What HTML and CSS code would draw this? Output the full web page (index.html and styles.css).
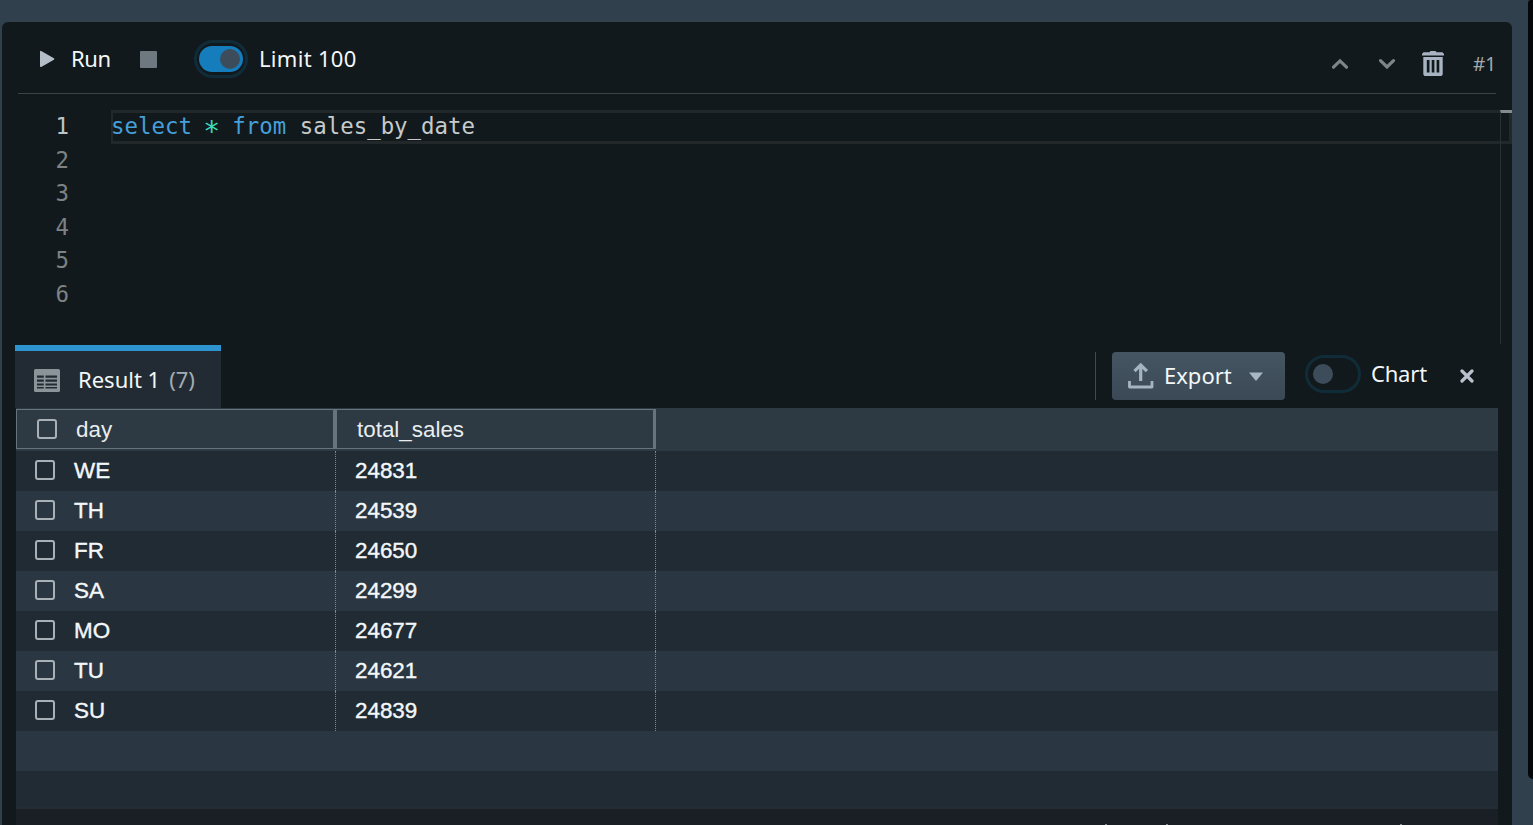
FILE: index.html
```html
<!DOCTYPE html>
<html lang="en">
<head>
  <meta charset="UTF-8">
  <title>Query Editor</title>
  <link rel="stylesheet" href="styles.css">
</head>
<body>

<div class="workspace">
  <div class="cell">

    <div class="toolbar">
      <div class="actions">
        <svg class="play" width="16" height="18" viewBox="0 0 16 18"><path d="M1.800 1.700v14.600L14.500 9z" fill="#b3bec9" stroke="#b3bec9" stroke-width="1.600" stroke-linejoin="round"/></svg>
        <span class="run">Run</span>
        <span class="stop"></span>
        <span class="switch on"><span class="track"><span class="knob"></span></span></span>
        <span class="limit">Limit 100</span>
      </div>
      <div class="cell-tools">
        <svg class="up" width="18" height="12" viewBox="0 0 18 12"><path d="M2.500 9.200L9 2.900l6.500 6.300" fill="none" stroke="#7d8587" stroke-width="3.200" stroke-linecap="round"/></svg>
        <svg class="down" width="18" height="12" viewBox="0 0 18 12"><path d="M2.500 2.600L9 8.900l6.500-6.300" fill="none" stroke="#7d8587" stroke-width="3.200" stroke-linecap="round"/></svg>
        <svg class="trash" width="22" height="25" viewBox="0 0 22 25">
          <path d="M8.500 0h5l1 1.300H20.500L22 3v1.500H0V3l1.500-1.700H7.500z" fill="#a9b4c2"/>
          <path fill-rule="evenodd" d="M1.300 6H20.700V23.500L19.500 25H2.500L1.300 23.500zM4.800 9v12.500h2.700V9zM9.700 9v12.500h2.700V9zM14.600 9v12.500h2.700V9z" fill="#a9b4c2"/>
        </svg>
        <span class="cell-id">#1</span>
      </div>
    </div>

    <div class="editor">
      <div class="gutter">
        <div class="current">1</div>
        <div>2</div>
        <div>3</div>
        <div>4</div>
        <div>5</div>
        <div>6</div>
      </div>
      <div class="code">
        <div class="line"><span class="kw">select</span> <span class="op">*</span> <span class="kw">from</span> sales_by_date</div>
        <div class="ruler"></div>
      </div>
    </div>

    <div class="result-bar">
      <div class="tab">
        <svg width="26" height="23" viewBox="0 0 26 23">
          <rect width="26" height="23" rx="1.500" fill="#8b9498"/>
          <path d="M3 6.500h6.800v2.200H3zM11.500 6.500H23v2.200H11.500zM3 10.500h6.800v2.200H3zM11.500 10.500H23v2.200H11.500zM3 14.400h6.800v2.200H3zM11.500 14.400H23v2.200H11.500zM3 18h6.800v1.500H3zM11.500 18H23v1.500H11.500z" fill="#222b33"/>
        </svg>
        <span class="tab-name">Result 1</span>
        <span class="count">(7)</span>
      </div>
      <div class="result-tools">
        <button class="export">
          <svg width="26" height="26" viewBox="0 0 26 26"><path d="M12.700 18V3M6.500 8.200l6.200-6.200 6.200 6.200" fill="none" stroke="#a6b4c2" stroke-width="3.200"/><path d="M1.500 18v6h22.500v-6" fill="none" stroke="#a6b4c2" stroke-width="2.800" stroke-linejoin="round"/></svg>
          <span>Export</span>
          <svg class="caret" width="14" height="9" viewBox="0 0 14 9"><path d="M0 .5h14L7 9z" fill="#a9b6c3"/></svg>
        </button>
        <span class="switch"><span class="track"><span class="knob"></span></span></span>
        <span class="chart">Chart</span>
        <svg class="close" width="14" height="14" viewBox="0 0 14 14"><path d="M2 2l10 10M12 2L2 12" stroke="#b9c2cc" stroke-width="3.200" stroke-linecap="round"/></svg>
      </div>
    </div>

    <div class="grid">
      <div class="row head">
        <div class="col"><span class="box"></span>day</div>
        <div class="col">total_sales</div>
      </div>
      <div class="row"><div class="col"><span class="box"></span>WE</div><div class="col">24831</div></div>
      <div class="row"><div class="col"><span class="box"></span>TH</div><div class="col">24539</div></div>
      <div class="row"><div class="col"><span class="box"></span>FR</div><div class="col">24650</div></div>
      <div class="row"><div class="col"><span class="box"></span>SA</div><div class="col">24299</div></div>
      <div class="row"><div class="col"><span class="box"></span>MO</div><div class="col">24677</div></div>
      <div class="row"><div class="col"><span class="box"></span>TU</div><div class="col">24621</div></div>
      <div class="row"><div class="col"><span class="box"></span>SU</div><div class="col">24839</div></div>
      <div class="row"></div>
      <div class="row last"></div>
    </div>
    <div class="status"><i></i><i></i><i></i></div>
  </div>
  <div class="scrollbar"></div>
</div>

</body>
</html>
```
FILE: styles.css
```css
* {
  box-sizing: border-box;
}
body {
  margin: 0;
  height: 825px;
  overflow: hidden;
  background: #30404d;
  color: #f4f7f9;
  font-family: "Noto Sans", "Open Sans", sans-serif;
  font-size: 22px;
}
svg {
  display: block;
  flex: none;
}
.workspace {
  display: flex;
  justify-content: space-between;
  height: 825px;
}
.cell {
  width: 1510px;
  height: 803px;
  margin: 22px 0 0 2px;
  background: #12191c;
  border-radius: 6px 6px 0 0;
  overflow: hidden;
}
.scrollbar {
  width: 5px;
  height: 779px;
  background: #06090b;
  border-radius: 4px 0 0 6px;
}

/* toolbar */
.toolbar {
  display: flex;
  justify-content: space-between;
  height: 72px;
  margin: 0 16px;
  border-bottom: 1px solid #3a4447;
}
.actions, .cell-tools {
  display: flex;
  align-items: center;
}
.actions {
  padding: 3px 0 0 21px;
}
.run {
  width: 40px;
  margin: -2px 29px 0 16px;
  letter-spacing: -0.4px;
  white-space: nowrap;
}
.stop {
  width: 17px;
  height: 17px;
  margin-right: 37px;
  background: #6e7881;
  border-radius: 1px;
}
.limit {
  margin: -2px 0 0 11px;
  letter-spacing: 0.3px;
  white-space: nowrap;
}
.switch {
  display: flex;
  flex: none;
  width: 56px;
  height: 38px;
  padding: 3px;
  border: 3px solid #102c39;
  border-radius: 19px;
}
.track {
  display: flex;
  align-items: center;
  flex: 1;
  padding: 0 2px;
  border-radius: 14px;
}
.knob {
  width: 20px;
  height: 20px;
  border-radius: 50%;
  background: #3d4c5a;
}
.switch.on {
  width: 54px;
  padding: 3px 2px;
}
.switch.on .track {
  justify-content: flex-end;
  padding-right: 3px;
  height: 26px;
  background: #167dbd;
}
.cell-tools {
  padding-top: 12px;
}
.down {
  margin-left: 29px;
}
.trash {
  margin: 0 29px 0 26px;
}
.cell-id {
  width: 22px;
  margin-right: 1px;
  color: #a0a9ad;
  font-size: 19px;
}

/* sql editor */
.editor {
  display: flex;
  height: 251px;
  padding-top: 16px;
  font-family: "DejaVu Sans Mono", monospace;
  font-size: 22.4px;
  line-height: 33.5px;
}
.gutter {
  width: 109px;
  padding-right: 42px;
  color: #7d8284;
  text-align: right;
}
.gutter .current {
  color: #c0c4c5;
}
.code {
  position: relative;
  flex: 1;
}
.line {
  height: 34px;
  border: 3px solid #22282a;
  border-left-width: 2px;
  line-height: 27px;
  text-indent: -2px;
  color: #c6cacb;
  white-space: pre;
}
.kw {
  color: #459fda;
}
.op {
  display: inline-block;
  height: 27px;
  vertical-align: top;
  color: #3dd9b8;
  text-indent: 0;
  transform: translate(0, 5px) scale(1.250);
}
.ruler {
  position: absolute;
  top: 0;
  right: 0;
  width: 12px;
  height: 234px;
  border-top: 3px solid #858a8b;
  border-left: 1px solid #2b3133;
}

/* results */
.result-bar {
  display: flex;
  justify-content: space-between;
  height: 63px;
  padding: 0 38px 0 13px;
}
.tab {
  display: flex;
  align-items: center;
  width: 206px;
  padding: 2px 0 0 19px;
  background: #222b33;
  border-top: 6px solid #2d94cf;
}
.tab-name {
  margin: -3px 9px 0 18px;
  white-space: nowrap;
}
.count {
  margin-top: -3px;
  color: #a3acb2;
}
.result-tools {
  display: flex;
  align-items: center;
  height: 48px;
  margin-top: 7px;
  padding-left: 16px;
  border-left: 1px solid #414a4d;
}
.export {
  display: flex;
  align-items: center;
  width: 173px;
  height: 48px;
  padding: 0 0 0 16px;
  border: none;
  border-radius: 4px;
  background: linear-gradient(#455561, #3b4956);
  color: #f4f7f9;
  font: inherit;
}
.export span {
  width: 67px;
  margin: -2px 18px 0 10px;
  text-align: left;
}
.result-tools .switch {
  margin: -4px 10px 0 20px;
}
.chart {
  width: 57px;
  margin: -6px 32px 0 0;
  letter-spacing: -0.2px;
}

.grid {
  width: 1482px;
  margin-left: 14px;
  font-family: "Liberation Sans", Arial, sans-serif;
  font-size: 22.400px;
}
.row {
  display: flex;
  height: 40px;
  background: #202b33;
}
.row:nth-child(odd) {
  background: #2a3742;
}
.col {
  display: flex;
  align-items: center;
  width: 320px;
  padding: 0 0 1px 19px;
  border-right: 1px dotted #7d8990;
  -webkit-text-stroke: 0.4px;
}
.box {
  width: 20px;
  height: 20px;
  margin: -1px 19px 0 0;
  border: 2px solid #a9b1b7;
  border-radius: 3px;
}
.row.head {
  height: 43px;
  padding-top: 1px;
  background: #2d3943;
}
.head .col {
  height: 40px;
  padding: 1px 0 0 20px;
  border: 1px solid #66747e;
  border-right-width: 3px;
  color: #e8edf0;
  -webkit-text-stroke: 0;
}
.row.last {
  height: 38px;
  border-bottom: 2px solid #252d33;
}
.status {
  display: flex;
  align-items: flex-end;
  width: 1482px;
  height: 16px;
  margin-left: 14px;
  padding-left: 1089px;
  background: #191f25;
}
.status i {
  width: 2px;
  height: 1px;
  margin-right: 59px;
  background: #858b90;
}
.status i + i {
  margin-right: 0;
}
.status i:last-child {
  margin-left: 232px;
}
```
